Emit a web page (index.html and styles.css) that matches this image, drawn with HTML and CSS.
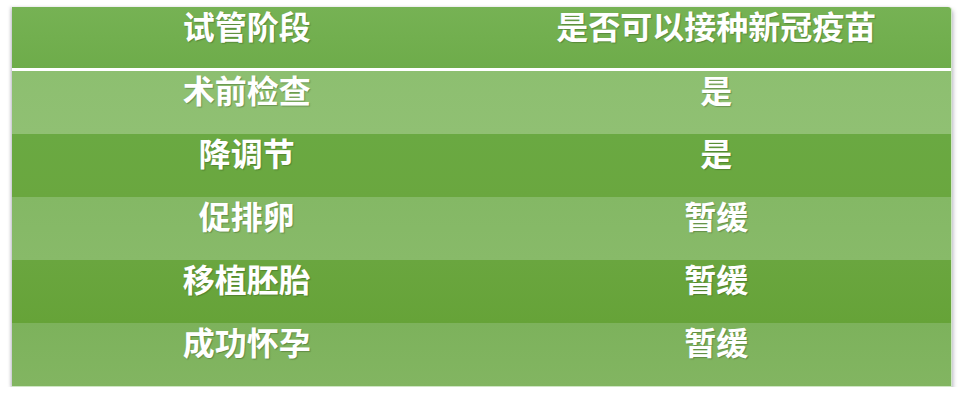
FILE: index.html
```html
<!DOCTYPE html>
<html lang="zh">
<head>
<meta charset="utf-8">
<link rel="stylesheet" href="styles.css">
</head>
<body>
<div class="wrap">
  <div class="table">
    <div class="row head"><div class="cell">试管阶段</div><div class="cell">是否可以接种新冠疫苗</div></div>
    <div class="row r1"><div class="cell">术前检查</div><div class="cell">是</div></div>
    <div class="row r2"><div class="cell">降调节</div><div class="cell">是</div></div>
    <div class="row r3"><div class="cell">促排卵</div><div class="cell">暂缓</div></div>
    <div class="row r4"><div class="cell">移植胚胎</div><div class="cell">暂缓</div></div>
    <div class="row r5"><div class="cell">成功怀孕</div><div class="cell">暂缓</div></div>
  </div>
</div>
</body>
</html>
```
FILE: styles.css
```css
html, body { margin: 0; padding: 0; background: #ffffff; }
.wrap { padding: 7px 0 0 12px; }
.table {
  width: 939px;
  display: flex;
  flex-direction: column;
  box-shadow: 1px 3px 4px rgba(90, 90, 110, 0.45), -2px 0 3px rgba(120,120,130,0.25);
  border-right: 1px solid #cfe6c4;
  border-bottom: 1px solid #cfe6c4;
  border-top-right-radius: 3px;
  font-family: "Noto Sans CJK SC", sans-serif;
  font-weight: 700;
  color: #ffffff;
}
.row { display: grid; grid-template-columns: 1fr 1fr; height: 63px; }
.cell {
  text-align: center;
  font-size: 32px;
  line-height: 36px;
  text-shadow: 1px 1px 1px rgba(40, 70, 20, 0.35);
}
.head { height: 61px; background: linear-gradient(#76b254, #6eac4a); border-bottom: 3px solid #ffffff; border-top-right-radius: 3px; }
.r1 { background: linear-gradient(#8dbf70, #90c073); }
.r2 { background: linear-gradient(#6aa942, #6aa73f); }
.r3 { background: linear-gradient(#84b865, #88ba69); }
.r4 { background: linear-gradient(#6aa63f, #66a338); }
.r5 { background: linear-gradient(#7db25c, #82b561); }
```
